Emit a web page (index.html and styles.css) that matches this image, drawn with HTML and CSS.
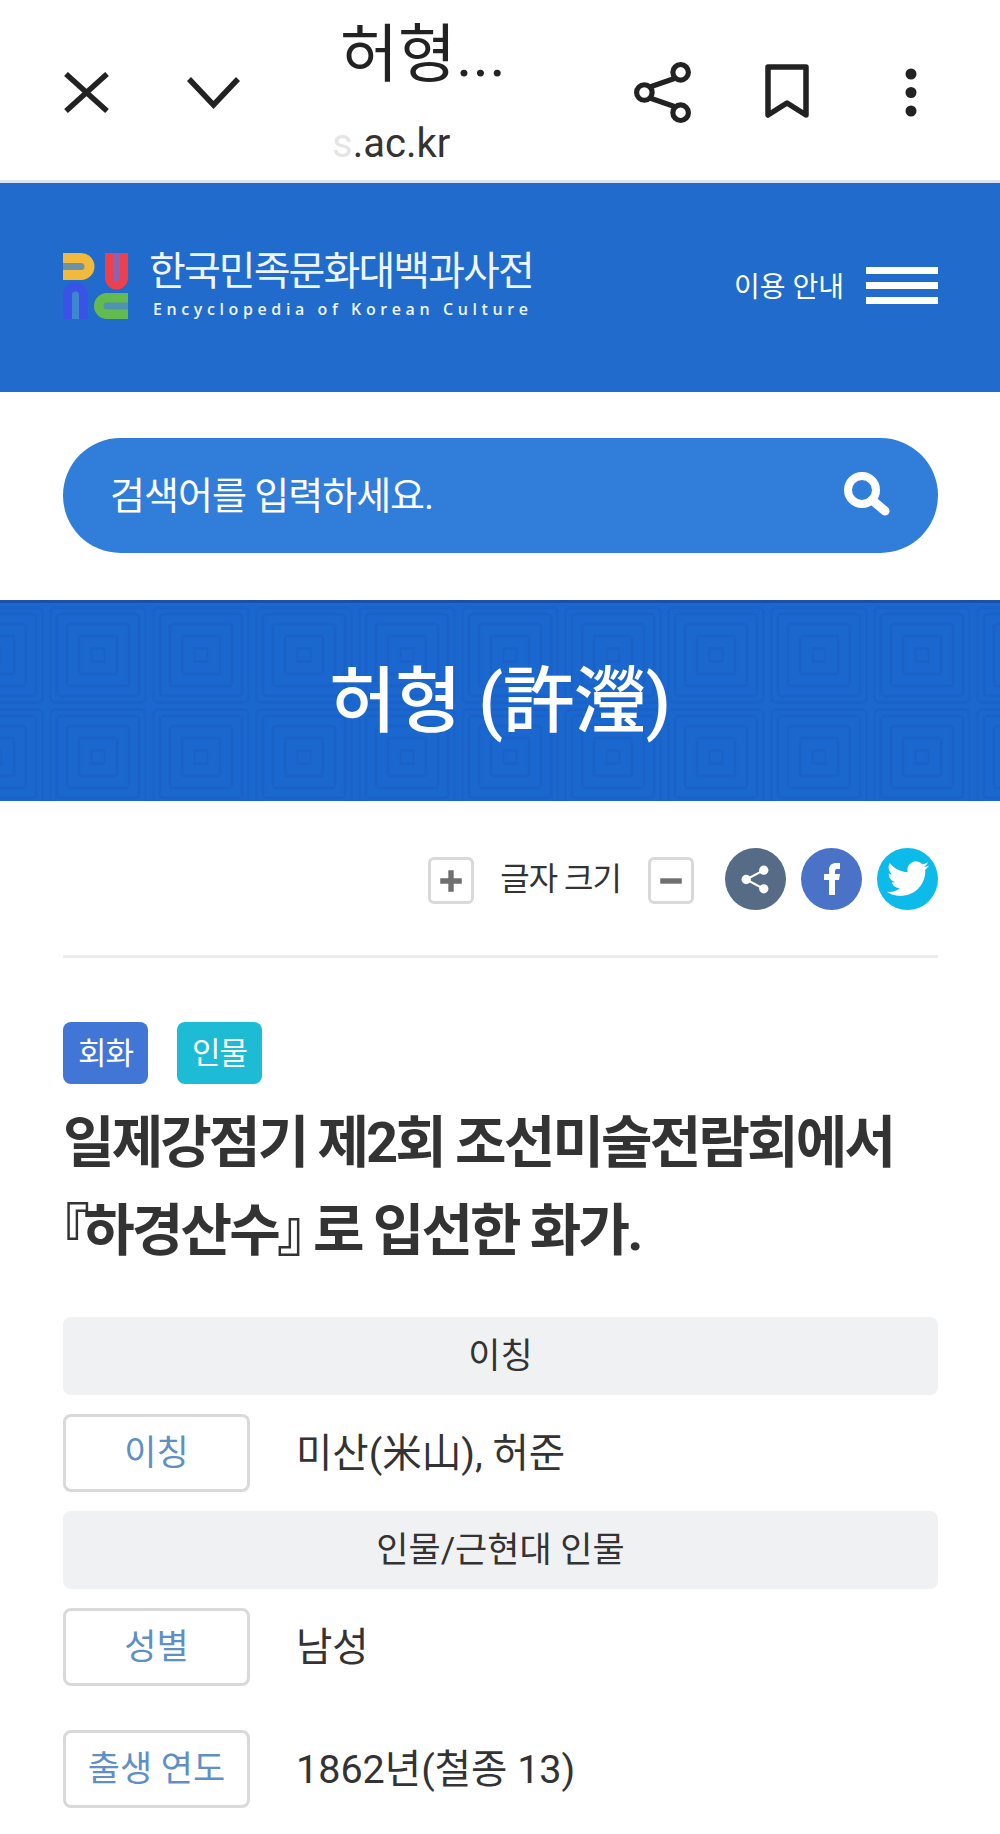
FILE: index.html
```html
<!DOCTYPE html>
<html lang="ko">
<head>
<meta charset="utf-8">
<title>허형</title>
<link rel="stylesheet" href="styles.css">
</head>
<body>
<div class="topbar">
  <svg class="ic ic-x" viewBox="0 0 45 41"><path d="M2 2 43 39M43 2 2 39" fill="none" stroke="#222" stroke-width="5.5"/></svg>
  <svg class="ic ic-chev" viewBox="0 0 53 33"><path d="M2 3 26.500 29 51 3" fill="none" stroke="#222" stroke-width="5.500"/></svg>
  <div class="tb-title">
    <div class="tb-name">허형...</div>
    <div class="tb-url"><span class="tb-fade">s</span>.ac.kr</div>
  </div>
  <svg class="ic ic-share" viewBox="0 0 55 61"><g fill="none" stroke="#222" stroke-width="5"><circle cx="45" cy="11" r="7.500"/><circle cx="10" cy="30.500" r="7.500"/><circle cx="45" cy="50" r="7.500"/><path d="M39 17 16 25M16 36 39 44"/></g></svg>
  <svg class="ic ic-book" viewBox="0 0 44 55"><path d="M3 3H41V51L22 39 3 51Z" fill="none" stroke="#222" stroke-width="5.500" stroke-linejoin="round"/></svg>
  <svg class="ic ic-dots" viewBox="0 0 12 49"><circle cx="6" cy="6" r="5.500" fill="#222"/><circle cx="6" cy="24.500" r="5.500" fill="#222"/><circle cx="6" cy="43" r="5.500" fill="#222"/></svg>
</div>

<header class="site-head">
  <div class="brand">
    <svg class="logo" viewBox="0 0 66 66">
      <path d="M0 0H18A13.500 13.500 0 0 1 18 27H0Z" fill="#f1ba3c"/>
      <path d="M0 10H18a3.500 3.500 0 0 1 0 7H0Z" fill="#6a93a5"/>
      <path d="M42 0H65V25A11.500 11.500 0 0 1 42 25Z" fill="#ee3f4c"/>
      <path d="M50 0H57V25a3.500 3.500 0 0 1 -7 0Z" fill="#8a63b5"/>
      <path d="M0 66V42A12.500 12.500 0 0 1 25 42V66Z" fill="#3b52e6"/>
      <path d="M9 66V42a3.500 3.500 0 0 1 7 0V66Z" fill="#3f86d0"/>
      <path d="M65 40H44A13 13 0 0 0 44 66H65Z" fill="#63bb4f"/>
      <path d="M65 49.500H44a3.500 3.500 0 0 0 0 7H65Z" fill="#4f93b0"/>
    </svg>
    <div class="brand-text">
      <div class="brand-ko">한국민족문화대백과사전</div>
      <div class="brand-en">Encyclopedia of Korean Culture</div>
    </div>
  </div>
  <div class="guide">
    <span class="guide-text">이용 안내</span>
    <span class="burger"><i></i><i></i><i></i></span>
  </div>
</header>

<section class="search-wrap">
  <div class="search">
    <span class="search-text">검색어를 입력하세요.</span>
    <svg class="search-ic" viewBox="0 0 47 44"><circle cx="19" cy="18" r="14" fill="none" stroke="#fff" stroke-width="8"/><path d="M29 28 42 39" stroke="#fff" stroke-width="9" stroke-linecap="round"/></svg>
  </div>
</section>

<section class="banner">
  <svg class="banner-bg" aria-hidden="true">
    <defs>
      <pattern id="sq" x="46.500" y="1" width="103" height="102" patternUnits="userSpaceOnUse">
        <rect width="103" height="102" fill="#1a68cf"/>
        <g fill="none" stroke="#1a62c8" stroke-width="3">
          <rect x="4" y="3.500" width="95" height="95" rx="5"/>
          <rect x="10.500" y="10" width="82" height="82" rx="4"/>
          <rect x="20.500" y="20" width="62" height="62" rx="3"/>
          <rect x="32.500" y="32" width="38" height="38" rx="2"/>
          <rect x="45" y="44.500" width="13" height="13"/>
        </g>
      </pattern>
    </defs>
    <rect width="100%" height="100%" fill="url(#sq)"/>
  </svg>
  <h1 class="banner-title">허형 (許瀅)</h1>
</section>

<main class="content">
  <div class="tools">
    <span class="size-btn"><svg viewBox="0 0 26 26"><path d="M13 3V23M3 13H23" stroke="#6f6f6f" stroke-width="5"/></svg></span>
    <span class="size-label">글자 크기</span>
    <span class="size-btn"><svg viewBox="0 0 26 26"><path d="M3 13H23" stroke="#6f6f6f" stroke-width="5"/></svg></span>
    <span class="circle c-share"><svg viewBox="0 0 30 30"><g fill="#fff"><circle cx="23" cy="6" r="4.500"/><circle cx="6" cy="15" r="4.500"/><circle cx="23" cy="24" r="4.500"/></g><path d="M23 6 6 15 23 24" fill="none" stroke="#fff" stroke-width="2"/></svg></span>
    <span class="circle c-fb"><svg viewBox="0 0 30 36"><path d="M12 34V19H7V13H12V9C12 4 15 2 19 2H23V8H20C18.500 8 18 9 18 10V13H23L22 19H18V34Z" fill="#fff"/></svg></span>
    <span class="circle c-tw"><svg viewBox="0 0 24 24"><path d="M23 5c-.8.4-1.700.6-2.600.7.900-.6 1.600-1.400 2-2.500-.9.500-1.800.9-2.900 1.100A4.500 4.500 0 0 0 11.800 8.500C8 8.300 4.700 6.500 2.500 3.700c-1.200 2-.6 4.600 1.400 6-.7 0-1.400-.2-2-.6 0 2.200 1.500 4.100 3.600 4.500-.7.200-1.400.2-2 .1.600 1.800 2.300 3.100 4.200 3.100A9.100 9.100 0 0 1 1 18.700 12.900 12.900 0 0 0 21 7.200c.8-.6 1.500-1.300 2-2.200Z" fill="#fff"/></svg></span>
  </div>

  <div class="tags">
    <span class="tag tag-a">회화</span>
    <span class="tag tag-b">인물</span>
  </div>

  <h2 class="summary">일제강점기 제2회 조선미술전람회에서<br><span class="br br-open">『</span>하경산수<span class="br br-close">』</span>로 입선한 화가.</h2>

  <div class="band band-first">이칭</div>
  <div class="row"><span class="key">이칭</span><span class="val">미산(米山), 허준</span></div>
  <div class="band">인물/근현대 인물</div>
  <div class="row row-b"><span class="key">성별</span><span class="val">남성</span></div>
  <div class="row"><span class="key">출생 연도</span><span class="val">1862년(철종 13)</span></div>
</main>
</body>
</html>
```

FILE: styles.css
```css
* { box-sizing: border-box; }
html, body { margin: 0; padding: 0; }
body {
  width: 1000px;
  height: 1834px;
  overflow: hidden;
  background: #fff;
  color: #333;
  font-family: Roboto, "Noto Sans CJK KR", "Noto Sans", sans-serif;
}

/* browser bar */
.topbar {
  height: 183px;
  display: flex;
  align-items: flex-start;
  border-bottom: 3px solid #dbe5f2;
  background: #fff;
}
.ic { display: block; flex: none; }
.ic-x { width: 45px; height: 41px; margin: 72px 0 0 64px; }
.ic-chev { width: 53px; height: 33px; margin: 76px 0 0 78px; }
.tb-title { width: 294px; margin-left: 100px; color: #222; }
.tb-name { font-size: 63px; line-height: 60px; margin-top: 25px; white-space: nowrap; font-weight: 400; }
.tb-url { font-size: 40px; line-height: 46px; margin-top: 36px; margin-left: -8px; color: #333; }
.tb-fade { opacity: .12; }
.ic-share { width: 57px; height: 65px; margin: 60px 0 0 0; }
.ic-book { width: 44px; height: 55px; margin: 64px 0 0 74px; }
.ic-dots { width: 12px; height: 49px; margin: 68px 0 0 96px; }

/* site header */
.site-head {
  height: 209px;
  background: #206bcb;
  display: flex;
  align-items: center;
  justify-content: space-between;
  padding: 0 62px 0 63px;
}
.brand { display: flex; align-items: center; gap: 20px; margin-top: -8px; }
.logo { width: 66px; height: 66px; display: block; margin-top: 4px; }
.brand-text { color: #eef5ff; }
.brand-ko { font-size: 40px; line-height: 46px; letter-spacing: -1.900px; font-weight: 400; white-space: nowrap; }
.brand-en { font-family: "Open Sans", sans-serif; font-size: 16px; font-weight: 600; line-height: 20px; letter-spacing: 4.600px; margin: 4px 0 0 4px; white-space: nowrap; }
.guide { display: flex; align-items: center; gap: 22px; margin-top: -4px; }
.guide-text { color: #fff; font-size: 28px; line-height: 36px; font-weight: 400; margin-top: 4px; }
.burger { display: flex; flex-direction: column; gap: 8px; width: 72px; }
.burger i { display: block; height: 7px; background: #fff; }

/* search */
.search-wrap { height: 208px; padding: 46px 62px 0 63px; }
.search {
  height: 115px;
  border-radius: 58px;
  background: #317dda;
  display: flex;
  align-items: center;
  justify-content: space-between;
  padding: 0 48px 0 47px;
}
.search-text { color: #fff; font-size: 38px; letter-spacing: -1px; font-weight: 400; margin-top: -6px; }
.search-ic { width: 47px; height: 44px; display: block; margin-top: -4px; }

/* banner */
.banner {
  position: relative;
  height: 201px;
  background: #1a68cf;
  border-top: 3px solid #1b52a8;
  display: flex;
  align-items: center;
  justify-content: center;
  overflow: hidden;
}
.banner-bg { position: absolute; left: 0; top: 0; width: 100%; height: 100%; }
.banner-title { position: relative; margin: 0; color: #fff; font-size: 72px; font-weight: 500; line-height: 90px; letter-spacing: -.5px; }

/* content */
.content { padding: 0 62px 0 63px; }
.tools {
  height: 157px;
  display: flex;
  align-items: flex-start;
  justify-content: flex-end;
  padding-top: 47px;
  border-bottom: 3px solid #ececec;
}
.size-btn {
  width: 46px;
  height: 47px;
  margin-top: 9px;
  border: 3px solid #d9d9d9;
  border-radius: 6px;
  display: flex;
  align-items: center;
  justify-content: center;
}
.size-btn svg { width: 28px; height: 28px; display: block; }
.size-label { font-size: 32px; line-height: 47px; margin: 8px 27px 0 26px; letter-spacing: -1px; color: #333; white-space: nowrap; font-weight: 400; }
.circle { width: 61px; height: 62px; border-radius: 50%; display: flex; align-items: center; justify-content: center; }
.c-share { background: #566b86; margin-left: 31px; }
.c-fb { background: #4a72c6; margin-left: 15px; }
.c-tw { background: #0cbbe9; margin-left: 15px; }
.c-share svg { width: 31px; height: 31px; }
.c-fb svg { width: 30px; height: 36px; }
.c-tw svg { width: 46px; height: 46px; }

.tags { display: flex; gap: 29px; margin-top: 64px; }
.tag {
  width: 85px;
  height: 62px;
  border-radius: 8px;
  color: #fff;
  font-size: 31px;
  letter-spacing: -1px;
  display: flex;
  align-items: center;
  justify-content: center;
  font-weight: 400;
  padding-bottom: 6px;
}
.tag-a { background: #4176d6; }
.tag-b { background: #1dbcd4; }

.summary { margin: 15px 0 0; font-size: 56px; line-height: 88px; font-weight: 700; letter-spacing: -2.850px; color: #333; white-space: nowrap; }
.br { font-feature-settings: "palt"; font-family: "Noto Sans CJK KR", sans-serif; line-height: 0; }
.br-open { margin-left: -2px; margin-right: -3px; }
.br-close { margin-right: 10px; }

.band {
  height: 78px;
  border-radius: 8px;
  background: #f0f1f3;
  display: flex;
  align-items: center;
  justify-content: center;
  font-size: 35px;
  margin-bottom: 19px;
  color: #333;
  font-weight: 400;
  padding-bottom: 8px;
}
.band-first { margin-top: 42px; }
.row { display: flex; align-items: center; gap: 46px; margin-bottom: 19px; }
.row-b { margin-bottom: 44px; }
.key {
  width: 187px;
  height: 78px;
  border: 3px solid #d9d9d9;
  border-radius: 8px;
  color: #5f8fc4;
  font-size: 35px;
  display: flex;
  align-items: center;
  justify-content: center;
  white-space: nowrap;
  font-weight: 400;
  padding-bottom: 8px;
}
.val { font-size: 39.500px; color: #333; white-space: nowrap; font-weight: 400; margin-top: -8px; }
```
